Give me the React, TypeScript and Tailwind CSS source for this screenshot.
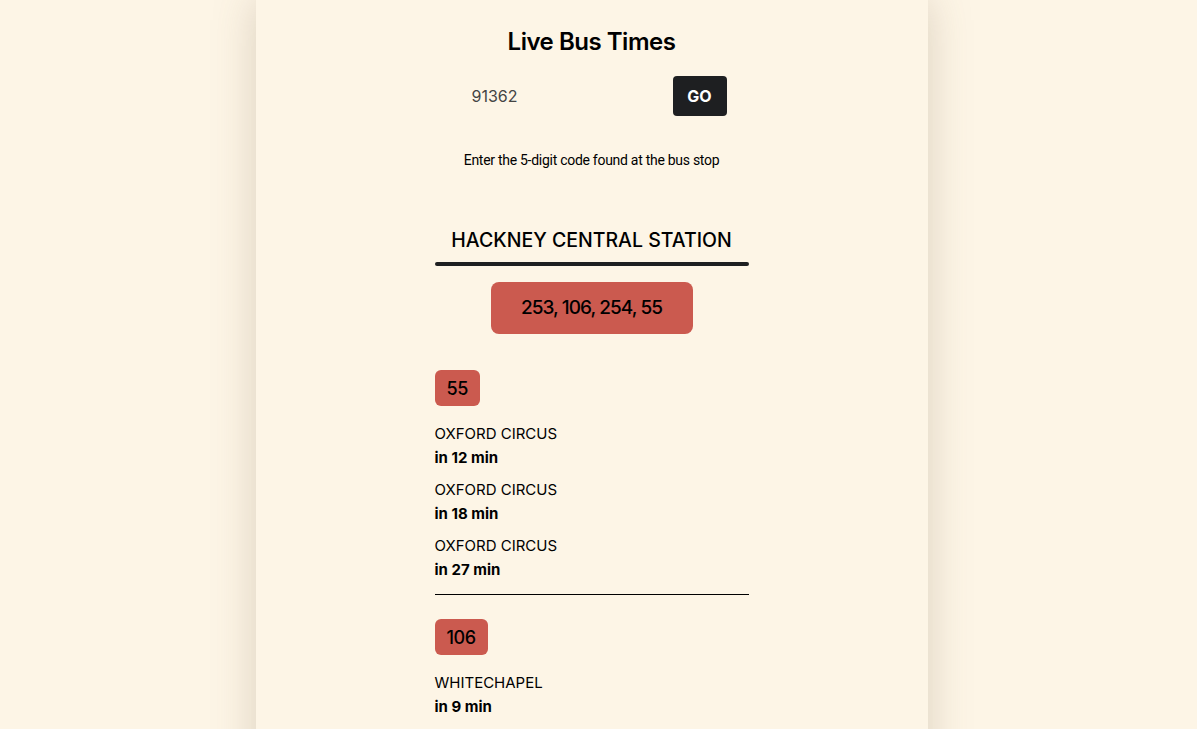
import { useState } from "react";

const arrivals = [
  {
    route: "55",
    buses: [
      { to: "OXFORD CIRCUS", mins: 12 },
      { to: "OXFORD CIRCUS", mins: 18 },
      { to: "OXFORD CIRCUS", mins: 27 },
    ],
  },
  {
    route: "106",
    buses: [
      { to: "WHITECHAPEL", mins: 9 },
      { to: "WHITECHAPEL", mins: 16 },
    ],
  },
];

const App = () => {
  const [code, setCode] = useState("91362");

  return (
    <div className="min-h-screen bg-[#fdf5e6] pr-[14px] font-['Inter',sans-serif] text-black">
      <main className="mx-auto w-[672px] min-h-screen bg-[#fdf5e6] shadow-[0_0_40px_rgba(120,100,70,0.25)] pt-[26px] pb-10">
        <div className="mx-auto w-[314px] flex flex-col">
          <h1 className="text-center text-[24px] leading-8 font-semibold tracking-[-0.02em]">
            Live Bus Times
          </h1>

          <form
            className="mt-[18px] flex items-center justify-center gap-2"
            onSubmit={(e) => e.preventDefault()}
          >
            <input
              value={code}
              onChange={(e) => setCode(e.target.value)}
              className="w-[208px] h-10 bg-transparent px-[15px] text-[16px] text-[#444] outline-none"
            />
            <button className="h-10 w-[54px] rounded-[4px] bg-[#1e1f21] text-white text-[16px] font-bold">
              GO
            </button>
          </form>

          <p className="mt-[34px] text-center text-[14px] leading-5 tracking-[-0.02em] font-['Roboto',sans-serif]">
            Enter the 5-digit code found at the bus stop
          </p>

          <h2 className="mt-[56px] text-center text-[19.5px] leading-7 font-medium">
            HACKNEY CENTRAL STATION
          </h2>
          <div className="mt-[8px] h-1 rounded-full bg-[#1e1f21]" />

          <div className="mt-4 self-center w-[202px] h-[52px] rounded-[8px] bg-[#cb5a4f] flex items-center justify-center text-[19px] font-medium tracking-[-0.05em]">
            253, 106, 254, 55
          </div>

          <div className="mt-9 flex flex-col">
            {arrivals.map((a, i) => (
              <section
                key={a.route}
                className={i === 0 ? "pb-[12px] border-b border-black" : "pt-6"}
              >
                <span className="inline-flex h-9 items-center rounded-[6px] bg-[#cb5a4f] px-[12px] text-[18px] font-medium tracking-[-0.02em]">
                  {a.route}
                </span>
                <ul className="mt-[16px] flex flex-col gap-2">
                  {a.buses.map((b, j) => (
                    <li key={j} className="text-[15px] leading-6">
                      <div>{b.to}</div>
                      <div className="font-bold">in {b.mins} min</div>
                    </li>
                  ))}
                </ul>
              </section>
            ))}
          </div>
        </div>
      </main>
    </div>
  );
};

export default App;
